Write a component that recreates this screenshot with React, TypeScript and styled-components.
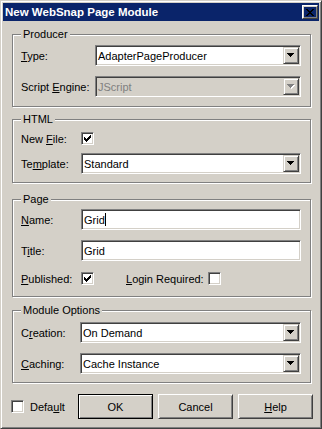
import React from 'react'
import styled, { createGlobalStyle, css } from 'styled-components'

const FACE = '#d4d0c8'
const SHADOW = '#808080'
const DARK = '#404040'

const GlobalStyle = createGlobalStyle`
  html, body {
    margin: 0;
    padding: 0;
    background: ${FACE};
  }
  body {
    font-family: 'Liberation Sans', Arial, sans-serif;
    font-size: 11px;
    color: #000;
  }
`

const sunken = css`
  border: 1px solid;
  border-color: ${SHADOW} #fff #fff ${SHADOW};
  box-shadow: inset 1px 1px 0 ${DARK}, inset -1px -1px 0 ${FACE};
`

const raised = css`
  border: 1px solid;
  border-color: #fff ${DARK} ${DARK} #fff;
  box-shadow: inset 1px 1px 0 ${FACE}, inset -1px -1px 0 ${SHADOW};
`

const Window = styled.div`
  width: 322px;
  height: 429px;
  box-sizing: border-box;
  border: 1px solid;
  border-color: ${FACE} ${DARK} ${DARK} ${FACE};
  box-shadow: inset 1px 1px 0 #fff, inset -1px -1px 0 ${SHADOW};
  padding: 2px;
  background: ${FACE};
  display: flex;
  flex-direction: column;
`

const TitleBar = styled.div`
  height: 18px;
  flex: none;
  background: #0a246a;
  display: flex;
  align-items: center;
  padding-left: 2px;
`

const TitleText = styled.span`
  flex: 1;
  color: #fff;
  font-weight: 700;
  font-size: 11.5px;
  white-space: nowrap;
`

const CloseButton = styled.div`
  ${raised}
  box-sizing: border-box;
  width: 16px;
  height: 14px;
  margin-right: 1px;
  display: flex;
  align-items: center;
  justify-content: center;
`

const Body = styled.div`
  display: flex;
  flex-direction: column;
  padding: 0 8px 0 9px;
`

const Group = styled.fieldset<{ $top: number; $padTop: number; $padBottom: number }>`
  margin: ${(p) => p.$top}px 0 0;
  padding: ${(p) => p.$padTop}px 9px ${(p) => p.$padBottom}px 8px;
  border: 1px solid ${SHADOW};
  box-shadow: inset 1px 1px 0 #fff, 1px 1px 0 #fff;
  min-width: 0;
`

const Legend = styled.legend`
  padding: 0 2px;
  line-height: 13px;
  background: ${FACE};
`

const Row = styled.div<{ $gap?: number }>`
  display: flex;
  align-items: center;
  margin-top: ${(p) => p.$gap ?? 0}px;
`

const Label = styled.span<{ $width: number }>`
  width: ${(p) => p.$width}px;
  flex: none;
  white-space: nowrap;
`

const Combo = styled.div<{ $disabled?: boolean }>`
  ${sunken}
  box-sizing: border-box;
  flex: 1;
  height: 21px;
  padding: 1px;
  display: flex;
  align-items: center;
  background: ${(p) => (p.$disabled ? FACE : '#fff')};
`

const FieldText = styled.span<{ $disabled?: boolean }>`
  flex: 1;
  padding-left: 1px;
  white-space: nowrap;
  display: flex;
  align-items: center;
  color: ${(p) => (p.$disabled ? SHADOW : '#000')};
`

const Caret = styled.span`
  width: 1px;
  height: 13px;
  background: #000;
`

const DropButton = styled.div`
  box-sizing: border-box;
  width: 16px;
  height: 17px;
  border: 1px solid;
  border-color: ${FACE} ${DARK} ${DARK} ${FACE};
  box-shadow: inset 1px 1px 0 #fff, inset -1px -1px 0 ${SHADOW};
  background: ${FACE};
  display: flex;
  align-items: center;
  justify-content: center;
`

const Edit = styled.div`
  ${sunken}
  box-sizing: border-box;
  flex: 1;
  height: 21px;
  padding: 1px;
  display: flex;
  align-items: center;
  background: #fff;
`

const CheckBox = styled.div`
  ${sunken}
  box-sizing: border-box;
  width: 13px;
  height: 13px;
  flex: none;
  background: #fff;
  display: flex;
  align-items: center;
  justify-content: center;
`

const InlineLabel = styled.span<{ $width: number }>`
  width: ${(p) => p.$width}px;
  flex: none;
  white-space: nowrap;
`

const Footer = styled.div`
  display: flex;
  align-items: center;
  margin: 11px -2px 0 -1px;
  gap: 5px;
`

const DefaultLabel = styled.span`
  margin-left: 1px;
  flex: 1;
`

const Button = styled.div<{ $default?: boolean }>`
  box-sizing: border-box;
  width: 75px;
  height: 25px;
  display: flex;
  align-items: center;
  justify-content: center;
  ${(p) =>
    p.$default
      ? css`
          border: 1px solid #000;
          box-shadow: inset 1px 1px 0 #fff, inset -1px -1px 0 ${SHADOW};
        `
      : raised}
`

const Arrow = ({ disabled }: { disabled?: boolean }) => (
  <svg width="8" height="5" viewBox="0 0 8 5" shapeRendering="crispEdges">
    {disabled && <path d="M1 1h7v1H1z M2 2h5v1H2z M3 3h3v1H3z M4 4h1v1H4z" fill="#fff" />}
    <path d="M0 0h7v1H0z M1 1h5v1H1z M2 2h3v1H2z M3 3h1v1H3z" fill={disabled ? SHADOW : '#000'} />
  </svg>
)

const Check = () => (
  <svg width="7" height="7" viewBox="0 0 7 7" shapeRendering="crispEdges">
    <path
      d="M6 0h1v1H6z M5 1h2v1H5z M0 2h1v1H0z M4 2h3v1H4z M0 3h2v1H0z M3 3h3v1H3z M0 4h5v1H0z M1 5h3v1H1z M2 6h1v1H2z"
      fill="#000"
    />
  </svg>
)

const CloseGlyph = () => (
  <svg width="8" height="7" viewBox="0 0 8 7" shapeRendering="crispEdges">
    <path
      d="M0 0h2v1H0z M6 0h2v1H6z M1 1h2v1H1z M5 1h2v1H5z M2 2h4v1H2z M3 3h2v1H3z M2 4h4v1H2z M1 5h2v1H1z M5 5h2v1H5z M0 6h2v1H0z M6 6h2v1H6z"
      fill="#000"
    />
  </svg>
)

const ComboBox = ({ value, disabled }: { value: string; disabled?: boolean }) => (
  <Combo $disabled={disabled}>
    <FieldText $disabled={disabled}>{value}</FieldText>
    <DropButton>
      <Arrow disabled={disabled} />
    </DropButton>
  </Combo>
)

const App = () => {
  return (
    <>
      <GlobalStyle />
      <Window>
        <TitleBar>
          <TitleText>New WebSnap Page Module</TitleText>
          <CloseButton>
            <CloseGlyph />
          </CloseButton>
        </TitleBar>
        <Body>
          <Group $top={7} $padTop={4} $padBottom={9}>
            <Legend>Producer</Legend>
            <Row>
              <Label $width={74}>
                <u>T</u>ype:
              </Label>
              <ComboBox value="AdapterPageProducer" />
            </Row>
            <Row $gap={10}>
              <Label $width={74}>
                Script <u>E</u>ngine:
              </Label>
              <ComboBox value="JScript" disabled />
            </Row>
          </Group>

          <Group $top={6} $padTop={6} $padBottom={8}>
            <Legend>HTML</Legend>
            <Row>
              <Label $width={60}>
                New <u>F</u>ile:
              </Label>
              <CheckBox>
                <Check />
              </CheckBox>
            </Row>
            <Row $gap={8}>
              <Label $width={60}>
                Te<u>m</u>plate:
              </Label>
              <ComboBox value="Standard" />
            </Row>
          </Group>

          <Group $top={10} $padTop={3} $padBottom={11}>
            <Legend>Page</Legend>
            <Row>
              <Label $width={60}>
                <u>N</u>ame:
              </Label>
              <Edit>
                <FieldText>
                  Grid
                  <Caret />
                </FieldText>
              </Edit>
            </Row>
            <Row $gap={10}>
              <Label $width={60}>
                T<u>i</u>tle:
              </Label>
              <Edit>
                <FieldText>Grid</FieldText>
              </Edit>
            </Row>
            <Row $gap={11}>
              <Label $width={60}>
                <u>P</u>ublished:
              </Label>
              <CheckBox>
                <Check />
              </CheckBox>
              <InlineLabel $width={82} style={{ marginLeft: 32 }}>
                <u>L</u>ogin Required:
              </InlineLabel>
              <CheckBox />
            </Row>
          </Group>

          <Group $top={7} $padTop={5} $padBottom={8}>
            <Legend>Module Options</Legend>
            <Row>
              <Label $width={59}>
                C<u>r</u>eation:
              </Label>
              <ComboBox value="On Demand" />
            </Row>
            <Row $gap={10}>
              <Label $width={59}>
                <u>C</u>aching:
              </Label>
              <ComboBox value="Cache Instance" />
            </Row>
          </Group>

          <Footer>
            <CheckBox />
            <DefaultLabel>
              Defa<u>u</u>lt
            </DefaultLabel>
            <Button $default>OK</Button>
            <Button>Cancel</Button>
            <Button>
              <span>
                <u>H</u>elp
              </span>
            </Button>
          </Footer>
        </Body>
      </Window>
    </>
  )
}

export default App
